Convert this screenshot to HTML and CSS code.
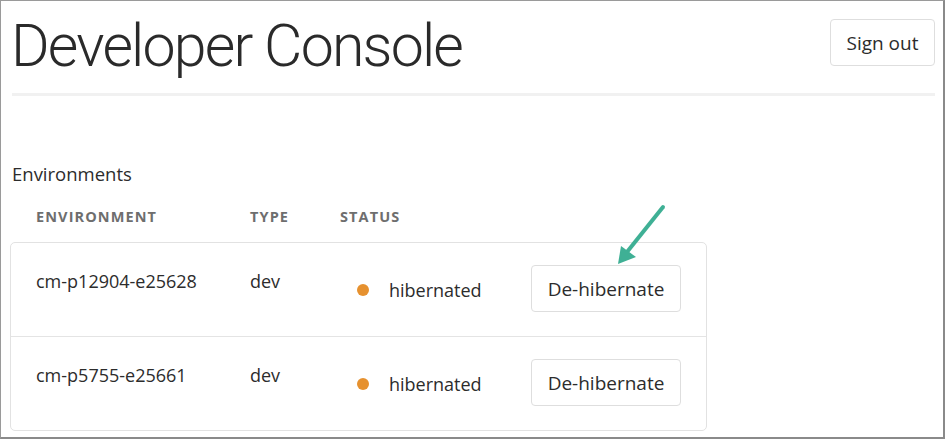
FILE: index.html
```html
<!DOCTYPE html>
<html>
<head>
<meta charset="utf-8">
<link rel="stylesheet" href="styles.css">
</head>
<body>
<div class="frame">
  <header class="top">
    <h1 class="title">Developer Console</h1>
    <button class="btn signout">Sign out</button>
  </header>
  <div class="rule"></div>
  <section class="envs">
    <h2 class="section-title">Environments</h2>
    <div class="thead">
      <span class="c-env">ENVIRONMENT</span>
      <span class="c-type">TYPE</span>
      <span class="c-status">STATUS</span>
    </div>
    <div class="card">
      <div class="row">
        <span class="c-env cell">cm-p12904-e25628</span>
        <span class="c-type2 cell">dev</span>
        <span class="status"><span class="dot"></span>hibernated</span>
        <button class="btn action">De-hibernate</button>
      </div>
      <div class="row">
        <span class="c-env cell">cm-p5755-e25661</span>
        <span class="c-type2 cell">dev</span>
        <span class="status"><span class="dot"></span>hibernated</span>
        <button class="btn action">De-hibernate</button>
      </div>
    </div>
  </section>
  <svg class="arrow" width="60" height="70" viewBox="0 0 60 70">
    <line x1="52" y1="4" x2="16" y2="49" stroke="#3fb095" stroke-width="4" stroke-linecap="round"/>
    <polygon points="7,61 10,43 25,54" fill="#3fb095"/>
  </svg>
</div>
</body>
</html>
```
FILE: styles.css
```css
* { box-sizing: border-box; }
html, body { margin: 0; padding: 0; background: #fff; }
body {
  font-family: "Open Sans", "Liberation Sans", sans-serif;
  color: #2c2c2c;
}
.frame {
  position: relative;
  width: 945px;
  height: 439px;
  border-left: 1px solid #9a9a9a;
  border-top: 1px solid #9a9a9a;
  border-right: 2px solid #8a8a8a;
  border-bottom: 2px solid #8a8a8a;
  overflow: hidden;
}
.top {
  display: flex;
  justify-content: space-between;
  align-items: flex-start;
  padding: 18px 8px 0 10px;
  height: 92px;
}
.title {
  margin: 0;
  font-family: "Roboto", "Lato", sans-serif;
  font-weight: 300;
  font-size: 59px;
  line-height: 59px;
  letter-spacing: -1.8px;
  color: #2a2a2a;
  margin-top: -3px;
}
.btn {
  background: #fff;
  border: 1px solid #dedede;
  border-radius: 4px;
  font-family: "Open Sans", "Liberation Sans", sans-serif;
  color: #2c2c2c;
  padding: 0;
}
.signout {
  width: 105px;
  height: 47px;
  font-size: 19px;
}
.rule {
  height: 3px;
  background: #f1f1f1;
  margin: 0 8px 0 11px;
}
.envs {
  padding: 0 0 0 9px;
}
.section-title {
  margin: 0;
  font-weight: 400;
  font-size: 18.5px;
  line-height: 24px;
  padding: 66px 0 0 2px;
  color: #2c2c2c;
}
.thead {
  display: flex;
  padding: 21px 0 0 26px;
  height: 56px;
  font-weight: 700;
  font-size: 14.5px;
  letter-spacing: 1.1px;
  color: #6e6e6e;
  line-height: 20px;
}
.thead .c-env { width: 214px; }
.thead .c-type { width: 90px; }
.card {
  width: 697px;
  border: 1px solid #e2e2e2;
  border-radius: 5px;
}
.row {
  display: flex;
  align-items: flex-start;
  padding: 22px 24px 23px 25px;
  height: 93px;
}
.row + .row {
  border-top: 1px solid #e4e4e4;
  height: 94px;
}
.cell {
  font-size: 18px;
  line-height: 24px;
  padding-top: 4px;
}
.row .c-env { width: 214px; }
.row .c-type2 { width: 107px; }
.status {
  width: 174px;
  height: 47px;
  display: flex;
  align-items: center;
  font-size: 18px;
  padding-top: 2px;
}
.dot {
  width: 12px;
  height: 12px;
  border-radius: 50%;
  background: #e6912f;
  margin-right: 20px;
}
.action {
  width: 150px;
  height: 47px;
  font-size: 19px;
}
.arrow {
  position: absolute;
  left: 610px;
  top: 202px;
}
```
